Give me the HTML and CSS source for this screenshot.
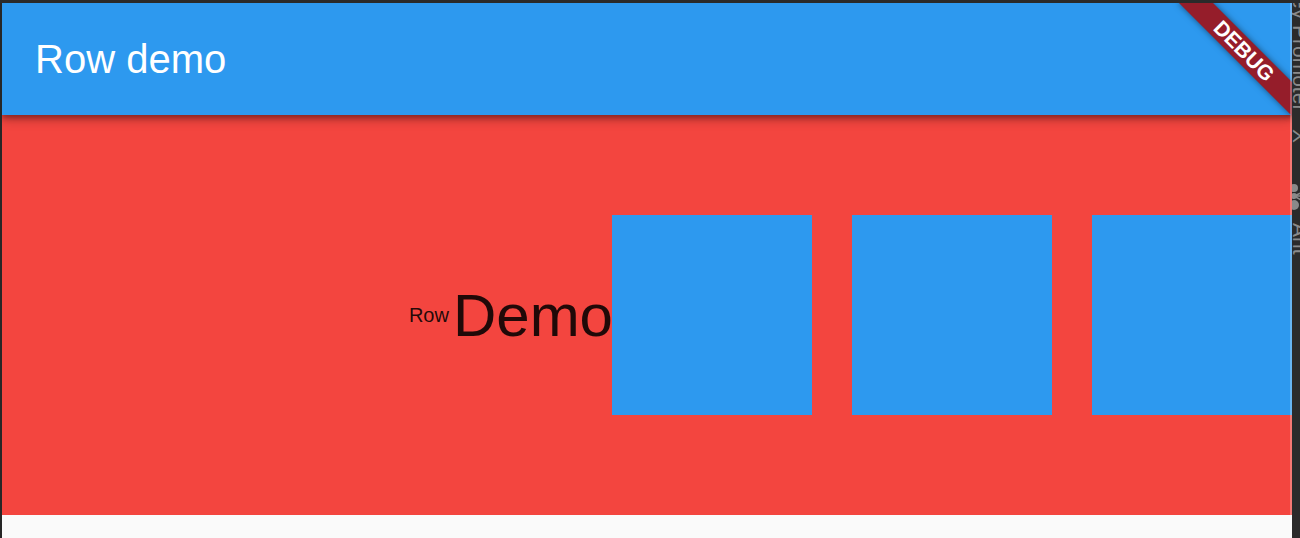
FILE: index.html
```
<!DOCTYPE html>
<html>
<head>
<meta charset="utf-8">
<title>Row demo</title>
<link rel="stylesheet" href="styles.css">
</head>
<body>
<div class="topbar"></div>
<div class="main">
  <div class="leftedge"></div>
  <div class="app">
    <header class="appbar">
      <span class="title">Row demo</span>
    </header>
    <section class="content">
      <span class="label-small">Row</span>
      <span class="label-big">Demo</span>
      <div class="boxes">
        <div class="box"></div>
        <div class="box"></div>
        <div class="box"></div>
      </div>
    </section>
    <div class="below"></div>
    <div class="banner">DEBUG</div>
    <div class="edge-glow"></div>
  </div>
  <aside class="toolstrip">
    <div class="tw tw-first">Key Promoter<span class="tw-x">X</span></div>
    <svg class="ant" width="24" height="27" viewBox="0 0 24 27">
      <g fill="#8a8a8a">
        <ellipse cx="10" cy="5" rx="4" ry="4"/>
        <ellipse cx="10" cy="13" rx="3" ry="3"/>
        <ellipse cx="10" cy="22" rx="5" ry="5"/>
      </g>
      <g stroke="#8a8a8a" stroke-width="1.5" fill="none">
        <path d="M10 13 L1 9 M10 13 L1 13 M10 13 L1 18 M10 13 L19 9 M10 13 L19 13 M10 13 L19 18"/>
      </g>
    </svg>
    <div class="tw tw-ant">Ant</div>
  </aside>
</div>
</body>
</html>
```
FILE: styles.css
```
html, body {
  margin: 0;
  padding: 0;
}
body {
  width: 1300px;
  height: 538px;
  overflow: hidden;
  background: #2b2b2b;
  display: flex;
  flex-direction: column;
  font-family: "Liberation Sans", Arial, sans-serif;
}
.topbar {
  height: 3px;
  flex: 0 0 3px;
  background: #2a2a2a;
}
.main {
  flex: 1;
  display: flex;
  min-height: 0;
}
.leftedge {
  width: 2px;
  flex: 0 0 2px;
  background: #262626;
}
.app {
  width: 1290px;
  flex: 0 0 1290px;
  position: relative;
  overflow: hidden;
  display: flex;
  flex-direction: column;
  background: #fafafa;
}
.appbar {
  height: 112px;
  flex: 0 0 112px;
  background: #2d99ef;
  display: flex;
  align-items: center;
  padding-left: 33px;
  position: relative;
  z-index: 1;
  box-shadow: 0 3px 5px rgba(0, 0, 0, 0.3), 0 5px 10px rgba(0, 0, 0, 0.22);
}
.title {
  color: #ffffff;
  font-size: 40px;
}
.content {
  height: 400px;
  flex: 0 0 400px;
  background: #f3453f;
  display: flex;
  align-items: center;
  justify-content: flex-end;
}
.label-small {
  font-size: 20px;
  color: rgba(0, 0, 0, 0.87);
  margin-right: 4px;
}
.label-big {
  font-size: 60px;
  color: rgba(0, 0, 0, 0.87);
  margin-right: -1px;
}
.boxes {
  display: flex;
  gap: 40px;
}
.box {
  width: 200px;
  height: 200px;
  background: #2d99ef;
}
.below {
  flex: 1;
  background: #fafafa;
}
.banner {
  position: absolute;
  top: 36px;
  right: -32px;
  width: 160px;
  height: 24px;
  line-height: 24px;
  text-align: center;
  transform: rotate(45deg);
  background: #951d2a;
  color: #ffffff;
  font-size: 21px;
  font-weight: bold;
  z-index: 2;
  box-shadow: 0 0 6px rgba(0, 0, 0, 0.5);
}
.edge-glow {
  position: absolute;
  top: 0;
  right: 0;
  bottom: 0;
  width: 2px;
  background: rgba(255, 255, 255, 0.28);
  z-index: 3;
}
.toolstrip {
  width: 8px;
  flex: 0 0 8px;
  overflow: hidden;
  background: #2b2b2b;
  display: flex;
  flex-direction: column;
  align-items: flex-start;
  color: #8a8a8a;
}
.tw {
  writing-mode: vertical-rl;
  font-size: 21px;
  line-height: 24px;
  width: 24px;
  margin-left: -4px;
  white-space: nowrap;
  flex: 0 0 auto;
}
.tw-first {
  margin-top: -20px;
}
.tw-x {
  margin-top: 18px;
  display: inline-block;
}
.ant {
  flex: 0 0 auto;
  margin-top: 40px;
  margin-left: -8px;
}
.tw-ant {
  margin-top: 13px;
}
```
